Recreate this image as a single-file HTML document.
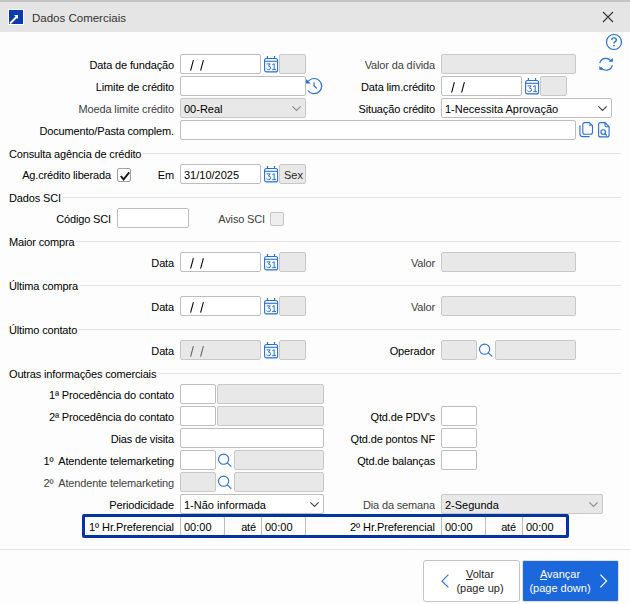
<!DOCTYPE html><html><head><meta charset="utf-8"><style>
*{margin:0;padding:0;box-sizing:border-box}
html,body{width:630px;height:604px;overflow:hidden;background:#fdfdfd;font-family:"Liberation Sans",sans-serif;font-size:11px;color:#000000}
#tb{position:absolute;left:0;top:0;width:630px;height:32px;background:#e5e5e5;border-top:2px solid #c3c3c3}
.tt{position:absolute;font-size:11.5px;color:#333;line-height:20px;white-space:nowrap}
.lb{position:absolute;height:20px;line-height:23px;letter-spacing:-0.15px;text-align:right;white-space:nowrap}
.in{position:absolute;background:#fff;border:1px solid #bdbdbd;border-radius:2px}
.in.dis{background:#e8e8e8;border-color:#c8c8c8}
.in span{position:absolute;top:0;line-height:21px;letter-spacing:0;white-space:nowrap;font-size:11px}
.ic{position:absolute}
.sec{position:absolute;display:flex;height:20px;line-height:21px;letter-spacing:-0.15px;white-space:nowrap}
.sec i{flex:1;height:1px;background:#e2e2e2;margin-top:9px;margin-left:2px}
.hl{position:absolute;height:1px;background:#e2e2e2}
.cb{position:absolute;width:14px;height:14px;border:1px solid #888;border-radius:2px}
#blue{position:absolute;left:82px;top:514px;width:487px;height:24px;border:3px solid #0433a3;border-radius:2px}
.btn{position:absolute;border-radius:3px}
.bt{position:absolute;text-align:center;line-height:13.5px;font-size:11px;white-space:nowrap}
</style></head><body><div id="tb"></div>
<svg class="ic" style="left:8px;top:9px" width="16" height="16" viewBox="0 0 16 16"><rect x="0.5" y="0.5" width="15" height="15" fill="#0a3cb0" stroke="#fff" stroke-width="1"/><path d="M2 14.5 L9.5 7" stroke="#fff" stroke-width="2"/><path d="M6 6 H10 V10 Z" fill="#fff"/></svg>
<div class="tt" style="left:32px;top:8px">Dados Comerciais</div>
<svg class="ic" style="left:602px;top:11px" width="12" height="12" viewBox="0 0 12 12"><path d="M1 1 L11 11 M11 1 L1 11" stroke="#333" stroke-width="1.1"/></svg>
<svg class="ic" style="left:605px;top:33px" width="18" height="18" viewBox="0 0 18 18"><circle cx="9" cy="9" r="7.5" fill="none" stroke="#2a6fd6" stroke-width="1.2"/><path d="M6.7 6.9 Q6.8 4.9 9 4.9 Q11.3 4.9 11.3 6.9 Q11.3 8.2 9.9 8.9 Q9 9.4 9 10.6" fill="none" stroke="#2a6fd6" stroke-width="1.4"/><circle cx="9" cy="12.6" r="0.9" fill="#2a6fd6"/></svg>
<svg class="ic" style="left:597px;top:55px" width="18" height="18" viewBox="0 0 18 18"><path d="M2.8 8.2 A6.2 6.2 0 0 1 14.2 6.4" fill="none" stroke="#2a6fd6" stroke-width="1.2"/><path d="M11.9 6.8 L15.9 6.8 L15.9 2.8 Z" fill="#2a6fd6"/><path d="M15.3 10.2 A6.2 6.2 0 0 1 3.9 12.2" fill="none" stroke="#2a6fd6" stroke-width="1.2"/><path d="M2.3 10.9 L2.3 14.8 L6.2 14.8 Z" fill="#2a6fd6"/></svg>
<div class="lb" style="left:0;width:174px;top:54px;color:#000000">Data de fundação</div>
<div class="in" style="left:180px;top:54px;width:81px;height:20px"><span style="left:3px;color:#000000"></span></div>
<svg class="ic" style="left:180px;top:54px" width="30" height="20" viewBox="0 0 30 20"><path d="M10.6 16.6 L13.4 6.2 M20.6 16.6 L23.4 6.2" stroke="#000000" stroke-width="1.05"/></svg>
<svg class="ic" style="left:263px;top:54px" width="16" height="20" viewBox="0 0 16 20"><rect x="1.6" y="4.5" width="13" height="13.4" rx="2" fill="none" stroke="#2a6fd6" stroke-width="1.1"/><path d="M1.6 7.3 H14.6" stroke="#2a6fd6" stroke-width="1.1"/><path d="M4.4 2 V4.5 M11.6 2 V4.5" stroke="#2a6fd6" stroke-width="1.1"/><path d="M3.6 9.9 H7.2 L5.4 12.1 Q7.6 12.1 7.6 13.8 Q7.6 15.6 5.6 15.6 Q4.1 15.6 3.5 14.6" fill="none" stroke="#2a6fd6" stroke-width="1"/><path d="M9.2 10.8 L11.2 9.6 V15.6 M9.2 15.6 H13" fill="none" stroke="#2a6fd6" stroke-width="1"/></svg>
<div class="in dis" style="left:279px;top:54px;width:27px;height:20px"><span style="left:3px;color:#000000"></span></div>
<div class="lb" style="left:0;width:435px;top:54px;color:#404040">Valor da dívida</div>
<div class="in dis" style="left:441px;top:54px;width:135px;height:20px"><span style="left:3px;color:#000000"></span></div>
<div class="lb" style="left:0;width:174px;top:76px;color:#000000">Limite de crédito</div>
<div class="in" style="left:180px;top:76px;width:126px;height:20px"><span style="left:3px;color:#000000"></span></div>
<svg class="ic" style="left:302px;top:74px" width="24" height="24" viewBox="0 0 24 24"><path d="M6.1 7.4 A7.6 7.6 0 1 1 5.9 16.5" fill="none" stroke="#2a6fd6" stroke-width="1.2"/><path d="M4 5 L4 9.6 L8.7 9.6 Z" fill="#2a6fd6"/><path d="M12 8.2 V11.8 L14.8 14.5" fill="none" stroke="#2a6fd6" stroke-width="1.2"/></svg>
<div class="lb" style="left:0;width:435px;top:76px;color:#000000">Data lim.crédito</div>
<div class="in" style="left:441px;top:76px;width:81px;height:20px"><span style="left:3px;color:#000000"></span></div>
<svg class="ic" style="left:441px;top:76px" width="30" height="20" viewBox="0 0 30 20"><path d="M10.6 16.6 L13.4 6.2 M20.6 16.6 L23.4 6.2" stroke="#000000" stroke-width="1.05"/></svg>
<svg class="ic" style="left:524px;top:76px" width="16" height="20" viewBox="0 0 16 20"><rect x="1.6" y="4.5" width="13" height="13.4" rx="2" fill="none" stroke="#2a6fd6" stroke-width="1.1"/><path d="M1.6 7.3 H14.6" stroke="#2a6fd6" stroke-width="1.1"/><path d="M4.4 2 V4.5 M11.6 2 V4.5" stroke="#2a6fd6" stroke-width="1.1"/><path d="M3.6 9.9 H7.2 L5.4 12.1 Q7.6 12.1 7.6 13.8 Q7.6 15.6 5.6 15.6 Q4.1 15.6 3.5 14.6" fill="none" stroke="#2a6fd6" stroke-width="1"/><path d="M9.2 10.8 L11.2 9.6 V15.6 M9.2 15.6 H13" fill="none" stroke="#2a6fd6" stroke-width="1"/></svg>
<div class="in dis" style="left:540px;top:76px;width:27px;height:20px"><span style="left:3px;color:#000000"></span></div>
<div class="lb" style="left:0;width:174px;top:98px;color:#404040">Moeda limite crédito</div>
<div class="in dis" style="left:180px;top:98px;width:126px;height:20px"><span style="left:3px">00-Real</span><svg style="position:absolute;left:109px;top:6px" width="12" height="8" viewBox="0 0 12 8"><path d="M2.4 1.4 L6.5 5.4 L10.6 1.4" fill="none" stroke="#8a8a8a" stroke-width="1.1"/></svg></div>
<div class="lb" style="left:0;width:435px;top:98px;color:#000000">Situação crédito</div>
<div class="in" style="left:441px;top:98px;width:171px;height:20px"><span style="left:3px">1-Necessita Aprovação</span><svg style="position:absolute;left:154px;top:6px" width="12" height="8" viewBox="0 0 12 8"><path d="M2.4 1.4 L6.5 5.4 L10.6 1.4" fill="none" stroke="#444" stroke-width="1.1"/></svg></div>
<div class="lb" style="left:0;width:174px;top:120px;color:#000000">Documento/Pasta complem.</div>
<div class="in" style="left:180px;top:120px;width:396px;height:20px"><span style="left:3px;color:#000000"></span></div>
<svg class="ic" style="left:578px;top:120px" width="18" height="20" viewBox="0 0 18 20"><path d="M6.8 2.6 H11.3 L14.5 5.8 V12.3 Q14.5 14.3 12.5 14.3 H6.8 Q4.8 14.3 4.8 12.3 V4.6 Q4.8 2.6 6.8 2.6 Z" fill="none" stroke="#2a6fd6" stroke-width="1.1"/><circle cx="12" cy="5.1" r="0.9" fill="#2a6fd6"/><path d="M1.9 5.3 V13.8 Q1.9 16.6 4.7 16.6 H11.6" fill="none" stroke="#2a6fd6" stroke-width="1.1"/></svg>
<svg class="ic" style="left:596px;top:120px" width="16" height="20" viewBox="0 0 16 20"><path d="M4.6 2.6 H9 L13.1 6.7 V14.9 Q13.1 16.9 11.1 16.9 H4.6 Q2.6 16.9 2.6 14.9 V4.6 Q2.6 2.6 4.6 2.6 Z M9 2.6 V5.2 Q9 6.7 10.5 6.7 H13.1" fill="none" stroke="#2a6fd6" stroke-width="1.1"/><circle cx="7.2" cy="12" r="2.3" fill="none" stroke="#2a6fd6" stroke-width="1.1"/><path d="M8.9 13.7 L10.8 15.5" stroke="#2a6fd6" stroke-width="1.2"/></svg>
<div class="sec" style="left:9px;top:144px;width:612px"><span>Consulta agência de crédito</span><i></i></div>
<div class="lb" style="left:0;width:111px;top:164px;color:#000000">Ag.crédito liberada</div>
<div class="cb" style="left:117px;top:168px;background:#fff;border-color:#a0a0a0"><svg style="position:absolute;left:1px;top:1px" width="12" height="12" viewBox="0 0 12 12"><path d="M1.8 6 L4.6 9.4 L10.2 2.4" fill="none" stroke="#1a1a1a" stroke-width="1.9"/></svg></div>
<div class="lb" style="left:0;width:174px;top:164px;color:#000000">Em</div>
<div class="in" style="left:180px;top:164px;width:81px;height:20px"><span style="left:3px;color:#000000">31/10/2025</span></div>
<svg class="ic" style="left:263px;top:164px" width="16" height="20" viewBox="0 0 16 20"><rect x="1.6" y="4.5" width="13" height="13.4" rx="2" fill="none" stroke="#2a6fd6" stroke-width="1.1"/><path d="M1.6 7.3 H14.6" stroke="#2a6fd6" stroke-width="1.1"/><path d="M4.4 2 V4.5 M11.6 2 V4.5" stroke="#2a6fd6" stroke-width="1.1"/><path d="M3.6 9.9 H7.2 L5.4 12.1 Q7.6 12.1 7.6 13.8 Q7.6 15.6 5.6 15.6 Q4.1 15.6 3.5 14.6" fill="none" stroke="#2a6fd6" stroke-width="1"/><path d="M9.2 10.8 L11.2 9.6 V15.6 M9.2 15.6 H13" fill="none" stroke="#2a6fd6" stroke-width="1"/></svg>
<div class="in dis" style="left:279px;top:164px;width:27px;height:20px"><span style="left:4px;color:#2a2a2a">Sex</span></div>
<div class="sec" style="left:9px;top:188px;width:612px"><span>Dados SCI</span><i></i></div>
<div class="lb" style="left:0;width:111px;top:208px;color:#000000">Código SCI</div>
<div class="in" style="left:117px;top:208px;width:72px;height:20px"><span style="left:3px;color:#000000"></span></div>
<div class="lb" style="left:0;width:265px;top:208px;color:#404040">Aviso SCI</div>
<div class="cb" style="left:270px;top:212px;background:#eeeeee;border-color:#c4c4c4"></div>
<div class="sec" style="left:9px;top:232px;width:612px"><span>Maior compra</span><i></i></div>
<div class="lb" style="left:0;width:174px;top:252px;color:#000000">Data</div>
<div class="in" style="left:180px;top:252px;width:81px;height:20px"><span style="left:3px;color:#000000"></span></div>
<svg class="ic" style="left:180px;top:252px" width="30" height="20" viewBox="0 0 30 20"><path d="M10.6 16.6 L13.4 6.2 M20.6 16.6 L23.4 6.2" stroke="#000000" stroke-width="1.05"/></svg>
<svg class="ic" style="left:263px;top:252px" width="16" height="20" viewBox="0 0 16 20"><rect x="1.6" y="4.5" width="13" height="13.4" rx="2" fill="none" stroke="#2a6fd6" stroke-width="1.1"/><path d="M1.6 7.3 H14.6" stroke="#2a6fd6" stroke-width="1.1"/><path d="M4.4 2 V4.5 M11.6 2 V4.5" stroke="#2a6fd6" stroke-width="1.1"/><path d="M3.6 9.9 H7.2 L5.4 12.1 Q7.6 12.1 7.6 13.8 Q7.6 15.6 5.6 15.6 Q4.1 15.6 3.5 14.6" fill="none" stroke="#2a6fd6" stroke-width="1"/><path d="M9.2 10.8 L11.2 9.6 V15.6 M9.2 15.6 H13" fill="none" stroke="#2a6fd6" stroke-width="1"/></svg>
<div class="in dis" style="left:279px;top:252px;width:27px;height:20px"><span style="left:3px;color:#000000"></span></div>
<div class="lb" style="left:0;width:435px;top:252px;color:#404040">Valor</div>
<div class="in dis" style="left:441px;top:252px;width:135px;height:20px"><span style="left:3px;color:#000000"></span></div>
<div class="sec" style="left:9px;top:276px;width:612px"><span>Última compra</span><i></i></div>
<div class="lb" style="left:0;width:174px;top:296px;color:#000000">Data</div>
<div class="in" style="left:180px;top:296px;width:81px;height:20px"><span style="left:3px;color:#000000"></span></div>
<svg class="ic" style="left:180px;top:296px" width="30" height="20" viewBox="0 0 30 20"><path d="M10.6 16.6 L13.4 6.2 M20.6 16.6 L23.4 6.2" stroke="#000000" stroke-width="1.05"/></svg>
<svg class="ic" style="left:263px;top:296px" width="16" height="20" viewBox="0 0 16 20"><rect x="1.6" y="4.5" width="13" height="13.4" rx="2" fill="none" stroke="#2a6fd6" stroke-width="1.1"/><path d="M1.6 7.3 H14.6" stroke="#2a6fd6" stroke-width="1.1"/><path d="M4.4 2 V4.5 M11.6 2 V4.5" stroke="#2a6fd6" stroke-width="1.1"/><path d="M3.6 9.9 H7.2 L5.4 12.1 Q7.6 12.1 7.6 13.8 Q7.6 15.6 5.6 15.6 Q4.1 15.6 3.5 14.6" fill="none" stroke="#2a6fd6" stroke-width="1"/><path d="M9.2 10.8 L11.2 9.6 V15.6 M9.2 15.6 H13" fill="none" stroke="#2a6fd6" stroke-width="1"/></svg>
<div class="in dis" style="left:279px;top:296px;width:27px;height:20px"><span style="left:3px;color:#000000"></span></div>
<div class="lb" style="left:0;width:435px;top:296px;color:#404040">Valor</div>
<div class="in dis" style="left:441px;top:296px;width:135px;height:20px"><span style="left:3px;color:#000000"></span></div>
<div class="sec" style="left:9px;top:320px;width:612px"><span>Último contato</span><i></i></div>
<div class="lb" style="left:0;width:174px;top:340px;color:#000000">Data</div>
<div class="in dis" style="left:180px;top:340px;width:81px;height:20px"><span style="left:3px;color:#000000"></span></div>
<svg class="ic" style="left:180px;top:340px" width="30" height="20" viewBox="0 0 30 20"><path d="M10.6 16.6 L13.4 6.2 M20.6 16.6 L23.4 6.2" stroke="#606060" stroke-width="1.05"/></svg>
<svg class="ic" style="left:263px;top:340px" width="16" height="20" viewBox="0 0 16 20"><rect x="1.6" y="4.5" width="13" height="13.4" rx="2" fill="none" stroke="#2a6fd6" stroke-width="1.1"/><path d="M1.6 7.3 H14.6" stroke="#2a6fd6" stroke-width="1.1"/><path d="M4.4 2 V4.5 M11.6 2 V4.5" stroke="#2a6fd6" stroke-width="1.1"/><path d="M3.6 9.9 H7.2 L5.4 12.1 Q7.6 12.1 7.6 13.8 Q7.6 15.6 5.6 15.6 Q4.1 15.6 3.5 14.6" fill="none" stroke="#2a6fd6" stroke-width="1"/><path d="M9.2 10.8 L11.2 9.6 V15.6 M9.2 15.6 H13" fill="none" stroke="#2a6fd6" stroke-width="1"/></svg>
<div class="in dis" style="left:279px;top:340px;width:27px;height:20px"><span style="left:3px;color:#000000"></span></div>
<div class="lb" style="left:0;width:435px;top:340px;color:#000000">Operador</div>
<div class="in dis" style="left:441px;top:340px;width:36px;height:20px"><span style="left:3px;color:#000000"></span></div>
<svg class="ic" style="left:478px;top:342px" width="16" height="16" viewBox="0 0 16 16"><circle cx="6.6" cy="7.2" r="5.1" fill="none" stroke="#2a6fd6" stroke-width="1.1"/><path d="M10.3 10.9 L14.3 14.6" stroke="#2a6fd6" stroke-width="1.2"/></svg>
<div class="in dis" style="left:495px;top:340px;width:81px;height:20px"><span style="left:3px;color:#000000"></span></div>
<div class="sec" style="left:9px;top:364px;width:612px"><span>Outras informações comerciais</span><i></i></div>
<div class="lb" style="left:0;width:174px;top:384px;color:#000000">1ª Procedência do contato</div>
<div class="in" style="left:180px;top:384px;width:36px;height:20px"><span style="left:3px;color:#000000"></span></div>
<div class="in dis" style="left:217px;top:384px;width:107px;height:20px"><span style="left:3px;color:#000000"></span></div>
<div class="lb" style="left:0;width:174px;top:406px;color:#000000">2ª Procedência do contato</div>
<div class="in" style="left:180px;top:406px;width:36px;height:20px"><span style="left:3px;color:#000000"></span></div>
<div class="in dis" style="left:217px;top:406px;width:107px;height:20px"><span style="left:3px;color:#000000"></span></div>
<div class="lb" style="left:0;width:435px;top:406px;color:#000000">Qtd.de PDV's</div>
<div class="in" style="left:441px;top:406px;width:36px;height:20px"><span style="left:3px;color:#000000"></span></div>
<div class="lb" style="left:0;width:174px;top:428px;color:#000000">Dias de visita</div>
<div class="in" style="left:180px;top:428px;width:144px;height:20px"><span style="left:3px;color:#000000"></span></div>
<div class="lb" style="left:0;width:435px;top:428px;color:#000000">Qtd.de pontos NF</div>
<div class="in" style="left:441px;top:428px;width:36px;height:20px"><span style="left:3px;color:#000000"></span></div>
<div class="lb" style="left:0;width:174px;top:450px;color:#000000">1º<i style="margin-left:2.5px"></i> Atendente telemarketing</div>
<div class="in" style="left:180px;top:450px;width:36px;height:20px"><span style="left:3px;color:#000000"></span></div>
<svg class="ic" style="left:217px;top:452px" width="16" height="16" viewBox="0 0 16 16"><circle cx="6.6" cy="7.2" r="5.1" fill="none" stroke="#2a6fd6" stroke-width="1.1"/><path d="M10.3 10.9 L14.3 14.6" stroke="#2a6fd6" stroke-width="1.2"/></svg>
<div class="in dis" style="left:234px;top:450px;width:90px;height:20px"><span style="left:3px;color:#000000"></span></div>
<div class="lb" style="left:0;width:435px;top:450px;color:#000000">Qtd.de balanças</div>
<div class="in" style="left:441px;top:450px;width:36px;height:20px"><span style="left:3px;color:#000000"></span></div>
<div class="lb" style="left:0;width:174px;top:472px;color:#404040">2º<i style="margin-left:2.5px"></i> Atendente telemarketing</div>
<div class="in dis" style="left:180px;top:472px;width:36px;height:20px"><span style="left:3px;color:#000000"></span></div>
<svg class="ic" style="left:217px;top:474px" width="16" height="16" viewBox="0 0 16 16"><circle cx="6.6" cy="7.2" r="5.1" fill="none" stroke="#2a6fd6" stroke-width="1.1"/><path d="M10.3 10.9 L14.3 14.6" stroke="#2a6fd6" stroke-width="1.2"/></svg>
<div class="in dis" style="left:234px;top:472px;width:90px;height:20px"><span style="left:3px;color:#000000"></span></div>
<div class="lb" style="left:0;width:174px;top:494px;color:#000000">Periodicidade</div>
<div class="in" style="left:180px;top:494px;width:144px;height:20px"><span style="left:3px">1-Não informada</span><svg style="position:absolute;left:127px;top:6px" width="12" height="8" viewBox="0 0 12 8"><path d="M2.4 1.4 L6.5 5.4 L10.6 1.4" fill="none" stroke="#444" stroke-width="1.1"/></svg></div>
<div class="lb" style="left:0;width:435px;top:494px;color:#404040">Dia da semana</div>
<div class="in dis" style="left:441px;top:494px;width:162px;height:20px"><span style="left:3px">2-Segunda</span><svg style="position:absolute;left:145px;top:6px" width="12" height="8" viewBox="0 0 12 8"><path d="M2.4 1.4 L6.5 5.4 L10.6 1.4" fill="none" stroke="#8a8a8a" stroke-width="1.1"/></svg></div>
<div class="in" style="left:180px;top:516px;width:45px;height:20px"><span style="left:3px;color:#000000">00:00</span></div>
<div class="lb" style="left:0;width:256px;top:516px;color:#000000">até</div>
<div class="in" style="left:261px;top:516px;width:45px;height:20px"><span style="left:3px;color:#000000">00:00</span></div>
<div class="lb" style="left:0;width:174px;top:516px;color:#000000"><span style="letter-spacing:-0.05px">1º Hr.Preferencial</span></div>
<div class="in" style="left:441px;top:516px;width:45px;height:20px"><span style="left:3px;color:#000000">00:00</span></div>
<div class="lb" style="left:0;width:516px;top:516px;color:#000000">até</div>
<div class="in" style="left:522px;top:516px;width:45px;height:20px"><span style="left:3px;color:#000000">00:00</span></div>
<div class="lb" style="left:0;width:435px;top:516px;color:#000000"><span style="letter-spacing:-0.05px">2º Hr.Preferencial</span></div>
<div id="blue"></div>
<div class="hl" style="left:0;top:549px;width:630px"></div>
<div class="btn" style="left:423px;top:560px;width:97px;height:42px;background:#fff;border:1px solid #c4c4c4"></div>
<svg class="ic" style="left:440px;top:573px" width="12" height="16" viewBox="0 0 12 16"><path d="M8.4 1.6 L2 8.2 L8.4 14.4" fill="none" stroke="#2a6fd6" stroke-width="1.15"/></svg>
<div class="bt" style="left:440px;top:568px;width:80px;color:#1e1e1e"><u>V</u>oltar<br>(page up)</div>
<div class="btn" style="left:522px;top:560px;width:97px;height:42px;background:#1b67dc;border:1px solid #e4ddd5;border-radius:2px"></div>
<div class="bt" style="left:522px;top:568px;width:76px;color:#fff"><u>A</u>vançar<br>(page down)</div>
<svg class="ic" style="left:597px;top:573px" width="12" height="16" viewBox="0 0 12 16"><path d="M3.4 1.6 L9.6 8 L3.4 14.4" fill="none" stroke="#fff" stroke-width="1.15"/></svg></body></html>
